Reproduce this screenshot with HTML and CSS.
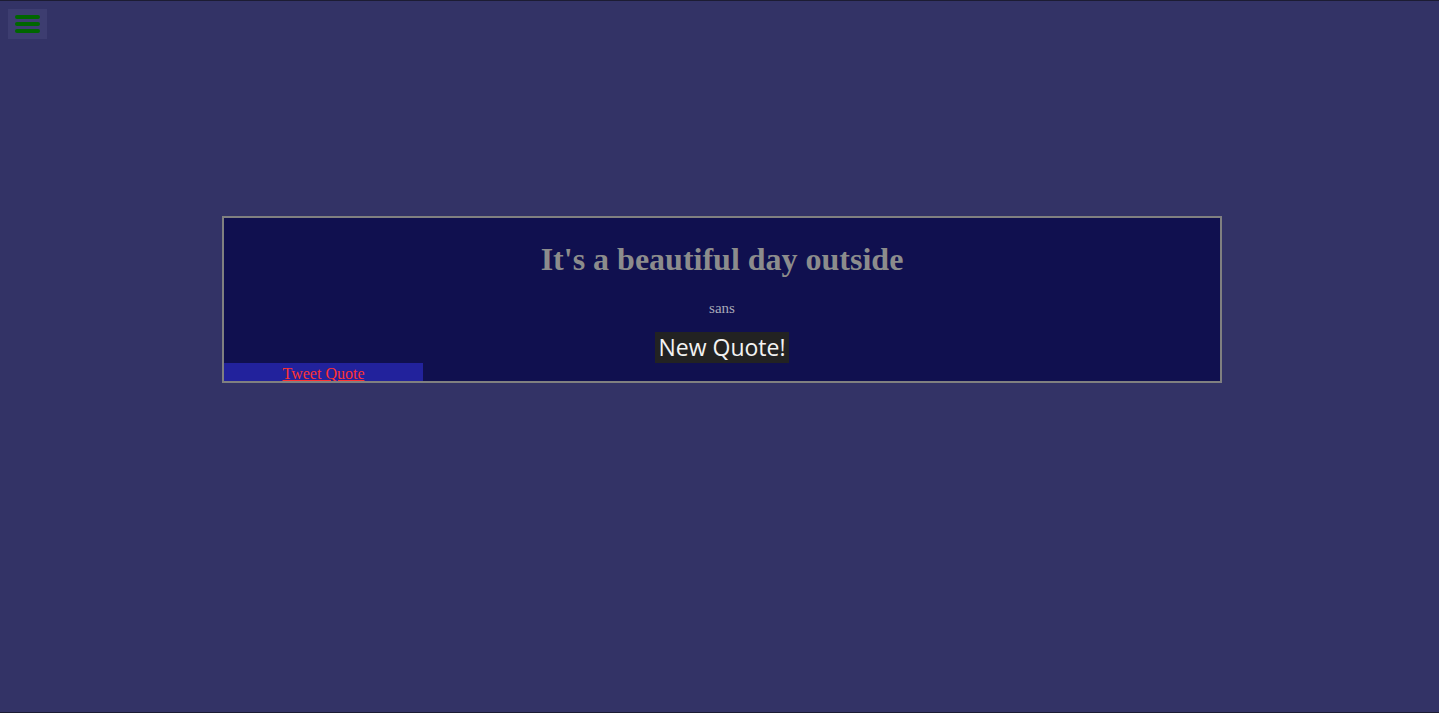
FILE: index.html
```html
<!DOCTYPE html>
<html>
<head>
<meta charset="utf-8">
<link rel="stylesheet" href="styles.css">
</head>
<body>
<div class="top">
  <button class="menu" aria-label="menu">
    <span class="bar"></span><span class="bar"></span><span class="bar"></span>
  </button>
</div>
<main class="stage">
  <section class="card">
    <h1 class="quote">It's a beautiful day outside</h1>
    <p class="author">sans</p>
    <div class="actions"><button class="new-quote">New Quote!</button></div>
    <div class="tweet"><a href="#">Tweet Quote</a></div>
  </section>
</main>
</body>
</html>
```
FILE: styles.css
```css
html, body {
  margin: 0;
  padding: 0;
  height: 100%;
}
body {
  background: #333366;
  box-sizing: border-box;
  border-top: 1px solid #1c1c33;
  border-bottom: 1px solid #1c1c33;
  font-family: "Liberation Serif", serif;
}
.top {
  padding: 8px 0 0 8px;
  height: 31px;
}
.menu {
  width: 39px;
  height: 30px;
  border: 0;
  padding: 6px 7px;
  margin: 0;
  background: #3d3d70;
  display: flex;
  flex-direction: column;
  justify-content: space-between;
}
.bar {
  display: block;
  width: 25px;
  height: 4px;
  border-radius: 2px;
  background: #006600;
}
.stage {
  padding: 176px 0 0 222px;
}
.card {
  width: 996px;
  height: 163px;
  border: 2px solid #808080;
  background: #10104f;
  display: flex;
  flex-direction: column;
}
.quote {
  margin: 0;
  padding-top: 21px;
  line-height: 40px;
  font-size: 32px;
  font-weight: bold;
  color: #8c8c8c;
  text-align: center;
}
.author {
  margin: 20px 0 0;
  line-height: 18px;
  font-size: 15px;
  color: #a8a8b8;
  text-align: center;
}
.actions {
  margin-top: 15px;
  display: flex;
  justify-content: center;
}
.new-quote {
  margin: 0;
  border: 0;
  padding: 0 3px;
  height: 31px;
  background: #222222;
  color: #f2f2f2;
  font-family: "Open Sans", Tahoma, sans-serif;
  font-size: 23px;
  line-height: 31px;
}
.tweet {
  width: 199px;
  height: 18px;
  background: #22229c;
  text-align: center;
  line-height: 21px;
  font-size: 16px;
  overflow: hidden;
}
.tweet a {
  color: #ff3333;
}
```
